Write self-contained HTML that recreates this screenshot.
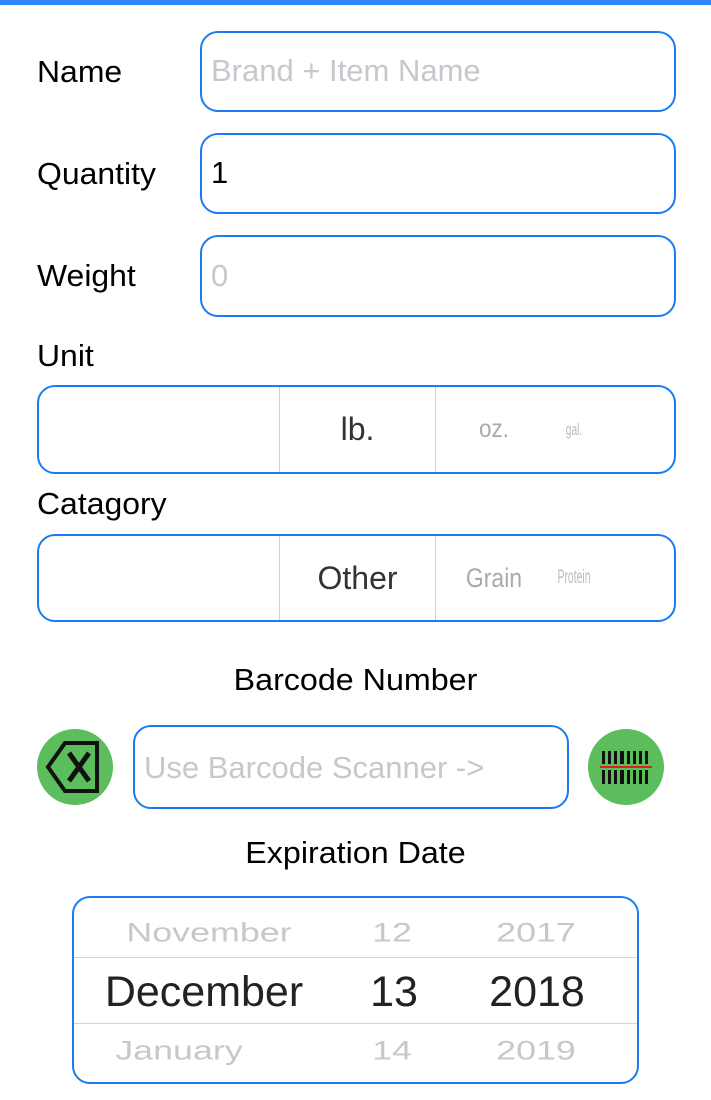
<!DOCTYPE html>
<html><head><meta charset="utf-8"><style>
*{margin:0;padding:0;box-sizing:border-box}
body{width:711px;height:1100px;background:#fff;position:relative;overflow:hidden;font-family:"Liberation Sans",sans-serif;color:#000}
.a{position:absolute}
.box{position:absolute;border:2px solid #1a7cf5;border-radius:18px;background:#fff}
.lbl{position:absolute;font-size:31px;left:37px;transform-origin:left center;transform:scaleX(1.03)}
.ph{position:absolute;font-size:31px;color:#c7c7cd;left:9px;white-space:nowrap}
.div{position:absolute;top:0;bottom:0;width:1px;background:#d0d0d0}
.seg{position:absolute;top:0;bottom:0;display:flex;align-items:center;justify-content:center}
.circ{position:absolute;width:76px;height:76px;border-radius:50%;background:#5cbd5c}
.pk{position:absolute;text-align:center;white-space:nowrap}
.g{font-size:32px;color:#c8c8c8;transform:scale(1.12,.85)}
</style></head><body>
<div class="a" style="left:0;top:0;width:711px;height:5px;background:#2f86f6"></div>

<div class="lbl" style="top:54px">Name</div>
<div class="box" style="left:200px;top:31px;width:476px;height:81px"><div class="ph" style="top:20px">Brand + Item Name</div></div>
<div class="lbl" style="top:156px">Quantity</div>
<div class="box" style="left:200px;top:133px;width:476px;height:81px"><div class="ph" style="top:20px;color:#000">1</div></div>
<div class="lbl" style="top:258px">Weight</div>
<div class="box" style="left:200px;top:235px;width:476px;height:82px"><div class="ph" style="top:21px">0</div></div>

<div class="lbl" style="top:338px">Unit</div>
<div class="box" style="left:37px;top:385px;width:639px;height:89px">
<div class="div" style="left:240px"></div><div class="div" style="left:396px"></div>
<div class="seg" style="left:241px;width:155px;font-size:32px;color:#333">lb.</div>
<div class="seg" style="left:438px;width:34px;font-size:25px;color:#aaa;transform:scaleX(.9)">oz.</div>
<div class="seg" style="left:525px;width:20px;font-size:17px;color:#bbb;transform:scaleX(.6)">gal.</div>
</div>

<div class="lbl" style="top:486px">Catagory</div>
<div class="box" style="left:37px;top:534px;width:639px;height:88px">
<div class="div" style="left:240px"></div><div class="div" style="left:396px"></div>
<div class="seg" style="left:241px;width:155px;font-size:32px;color:#333">Other</div>
<div class="seg" style="left:420px;width:70px;font-size:27px;color:#aaa;transform:scaleX(.85)">Grain</div>
<div class="seg" style="left:515px;width:40px;font-size:19px;color:#bbb;transform:scaleX(.55)">Protein</div>
</div>

<div class="a" style="left:0;width:711px;top:662px;text-align:center;font-size:31px;transform:scaleX(1.04)">Barcode Number</div>
<div class="circ" style="left:37px;top:729px">
<svg width="76" height="76" viewBox="0 0 76 76"><path d="M60 14 H28 L11 38 L28 62 H60 Z" fill="none" stroke="#111" stroke-width="4" stroke-linejoin="miter"/><path d="M32 24 L52 52 M52 24 L32 52" stroke="#111" stroke-width="5"/></svg></div>
<div class="box" style="left:133px;top:725px;width:436px;height:84px"><div class="ph" style="top:23px;font-size:31px">Use Barcode Scanner -&gt;</div></div>
<div class="circ" style="left:588px;top:729px">
<svg width="76" height="76" viewBox="0 0 76 76"><g fill="#111"><rect x="14" y="22" width="3" height="13"/><rect x="20" y="22" width="3" height="13"/><rect x="26" y="22" width="3" height="13"/><rect x="32" y="22" width="4" height="13"/><rect x="39" y="22" width="3" height="13"/><rect x="45" y="22" width="3" height="13"/><rect x="51" y="22" width="3" height="13"/><rect x="57" y="22" width="3" height="13"/>
<rect x="14" y="41" width="3" height="14"/><rect x="20" y="41" width="3" height="14"/><rect x="26" y="41" width="3" height="14"/><rect x="32" y="41" width="4" height="14"/><rect x="39" y="41" width="3" height="14"/><rect x="45" y="41" width="3" height="14"/><rect x="51" y="41" width="3" height="14"/><rect x="57" y="41" width="3" height="14"/></g><rect x="12" y="37" width="52" height="2" fill="#e02020"/></svg></div>

<div class="a" style="left:0;width:711px;top:835px;text-align:center;font-size:31px;transform:scaleX(1.04)">Expiration Date</div>
<div class="box" style="left:72px;top:896px;width:567px;height:188px;overflow:hidden">
<div class="a" style="left:0;right:0;top:59px;height:1px;background:#d4d4d4"></div>
<div class="a" style="left:0;right:0;top:125px;height:1px;background:#d4d4d4"></div>
<div class="pk g" style="left:35px;width:200px;top:16px">November</div>
<div class="pk g" style="left:278px;width:80px;top:16px">12</div>
<div class="pk g" style="left:402px;width:120px;top:16px">2017</div>
<div class="pk" style="left:20px;width:220px;top:70px;font-size:43px;color:#222">December</div>
<div class="pk" style="left:280px;width:80px;top:70px;font-size:43px;color:#222">13</div>
<div class="pk" style="left:398px;width:130px;top:70px;font-size:43px;color:#222">2018</div>
<div class="pk g" style="left:20px;width:170px;top:134px">January</div>
<div class="pk g" style="left:278px;width:80px;top:134px">14</div>
<div class="pk g" style="left:402px;width:120px;top:134px">2019</div>
</div>
</body></html>
